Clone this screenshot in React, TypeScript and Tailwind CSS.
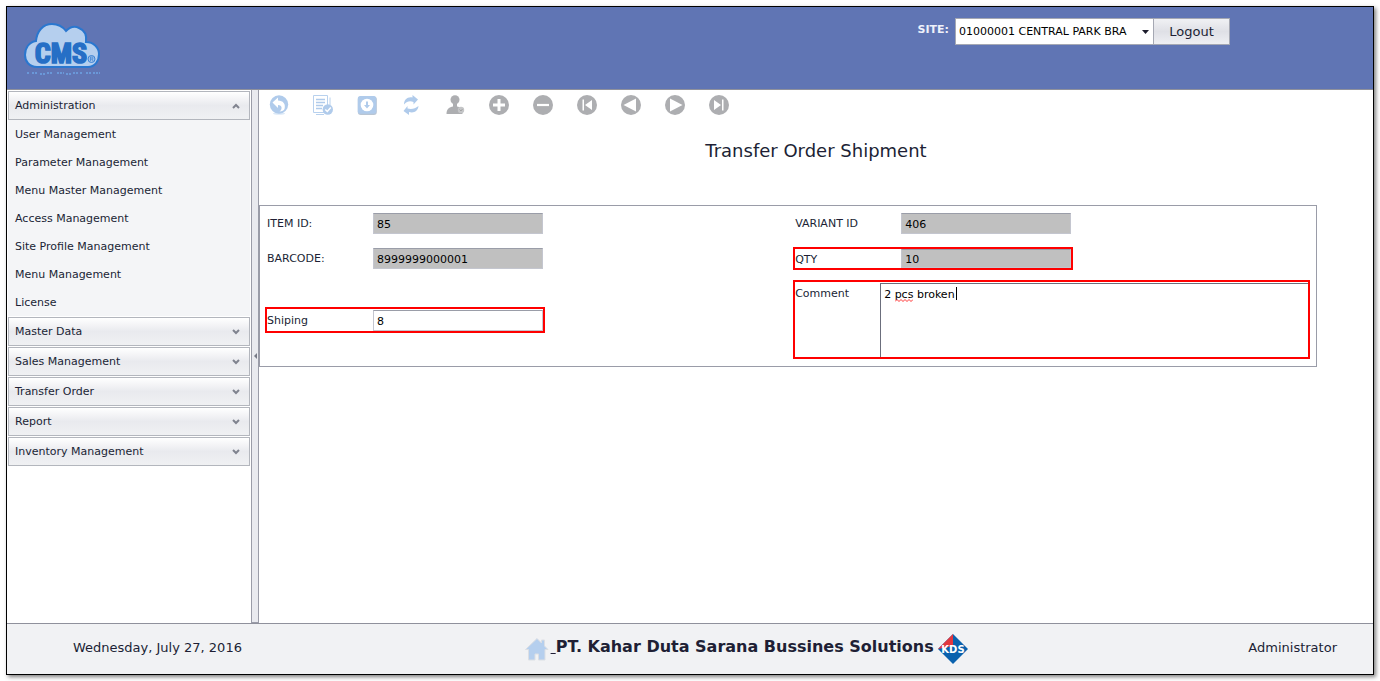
import { useState, type ReactNode } from "react";

const menuItems = [
  "User Management",
  "Parameter Management",
  "Menu Master Management",
  "Access Management",
  "Site Profile Management",
  "Menu Management",
  "License",
];

const closedGroups = ["Master Data", "Sales Management", "Transfer Order", "Report", "Inventory Management"];

function Chevron({ up = false }: { up?: boolean }) {
  return (
    <svg width="8" height="6" viewBox="0 0 8 6" fill="none" stroke="#80838f" strokeWidth="2">
      {up ? <path d="M1 5l3-3 3 3" /> : <path d="M1 1l3 3 3-3" />}
    </svg>
  );
}

function GroupHeader({ label, open = false }: { label: string; open?: boolean }) {
  return (
    <button
      type="button"
      aria-expanded={open}
      className="flex h-[29px] w-full items-center justify-between border border-[#b3b6bd] bg-linear-to-b from-white via-[#e9eaee] to-[#f0f1f3] pr-[9px] pl-[6px] text-left"
    >
      <span className="pt-[2px]">{label}</span>
      <Chevron up={open} />
    </button>
  );
}

function Logo() {
  return (
    <svg width="80" height="56" viewBox="0 0 80 56" role="img" aria-label="CMS">
      <path
        d="M14 45C6 45 2 39 2 33C2 26 6 20 13 19C14 9 20 2 29 2C35 2 40 5 43 9C47 5 52 4 56 6C61 8 64 13 63 20C71 20 76 26 76 32C76 39 72 45 65 45Z"
        fill="#b5cfee"
        stroke="#2a77cf"
        strokeWidth="2"
      />
      <text
        x="38"
        y="41"
        textAnchor="middle"
        fill="#266fc6"
        stroke="#266fc6"
        strokeWidth="1.6"
        fontSize="28"
        className="font-['Roboto_Condensed','Liberation_Sans_Narrow',Roboto,sans-serif] font-bold"
      >
        CMS
      </text>
      <circle cx="68.500" cy="37" r="3.500" fill="#9fc1ea" stroke="#3b82d3" />
      <path d="M67.500 39v-4h1.500q1 0 1 1t-1 1h-1.500m1.500 0l1 2" fill="none" stroke="#3b82d3" strokeWidth=".7" />
      <path
        d="M4 51h3m2 0h6m2 1h5m2-1h5m5 0h7m2 1h5m2-1h5m2 0h3m3 0h5m2 0h7"
        stroke="#6fa8ea"
        strokeWidth="2"
        strokeDasharray="2 1"
        opacity=".7"
      />
    </svg>
  );
}

function Disc({ children }: { children: ReactNode }) {
  return (
    <>
      <circle cx="10" cy="10" r="10" fill="#adaeb1" />
      {children}
    </>
  );
}

const tools: { label: string; art: ReactNode }[] = [
  {
    label: "Back",
    art: (
      <>
        <ellipse cx="10" cy="18.500" rx="6" ry="1.300" fill="#dce9f7" />
        <circle cx="10" cy="9.500" r="9.200" fill="#b0cbeb" />
        <path d="M3.500 7.500L9 2.500V5.500C14 5.500 17 9 15.500 14C15 15.500 13 16.500 10.500 16.500C13.500 14.500 13.500 10 9 10V13Z" fill="#fff" />
      </>
    ),
  },
  {
    label: "Save",
    art: (
      <>
        <path d="M.5 .5h14v17H.5zM17 2.500v8M3 19.500h8" fill="#fff" stroke="#b8d1ee" />
        <path d="M3 4.500h9M3 7.500h9M3 10.500h7M3 13.500h6" stroke="#b0cbeb" strokeWidth="1.400" />
        <circle cx="14.800" cy="14.500" r="5.200" fill="#b0cbeb" />
        <path d="M12.300 14.500l2 2 3.500-4" fill="none" stroke="#fff" strokeWidth="1.500" />
      </>
    ),
  },
  {
    label: "Download",
    art: (
      <>
        <rect x=".8" y="1.500" width="19" height="18.500" rx="3" fill="#b9c5d3" />
        <rect x=".8" y="1" width="18.400" height="17.800" rx="2.500" fill="#b0cbeb" />
        <circle cx="10" cy="10" r="6.300" fill="#fff" />
        <path d="M9 6.500h2V10h2l-3 3.500L7 10h2z" fill="#b0cbeb" />
      </>
    ),
  },
  {
    label: "Refresh",
    art: (
      <>
        <path d="M3 9.500C3 4.500 6.500 1.500 11.500 2.500V0L17 4.500L12.500 9.500V7C8.500 5.500 6 6.500 3 9.500Z" fill="#b0cbeb" />
        <path d="M17.500 11C17 16 13 18.500 8 17V20L2.500 16L6.500 11V13.500C11 14.500 14 13.500 17.500 11Z" fill="#b0cbeb" />
      </>
    ),
  },
  {
    label: "User",
    art: (
      <>
        <circle cx="10" cy="4.800" r="4.500" fill="#adaeb1" />
        <path d="M1.500 19C1.500 14 4.500 12 8 11.500V8H12V11.500C15.500 12 17.500 14 17.500 19Z" fill="#adaeb1" />
        <circle cx="16" cy="15" r="3.200" fill="#c4c5c7" />
        <path d="M14.500 14.500l1.500 1.500 1.500-2" fill="none" stroke="#999" strokeWidth=".8" />
      </>
    ),
  },
  { label: "Add", art: <Disc><path d="M10 4v12M4 10h12" stroke="#fff" strokeWidth="3" /></Disc> },
  { label: "Remove", art: <Disc><path d="M4 10h12" stroke="#fff" strokeWidth="2.200" /></Disc> },
  { label: "First", art: <Disc><path d="M5.500 4.500H7v11H5.500zM15 5v10l-7-5z" fill="#fff" /></Disc> },
  { label: "Previous", art: <Disc><path d="M15 3.500v13L2.500 10z" fill="#fff" /></Disc> },
  { label: "Next", art: <Disc><path d="M5 3.500v13L17.500 10z" fill="#fff" /></Disc> },
  { label: "Last", art: <Disc><path d="M13 4.500h1.500v11H13zM5 5v10l7-5z" fill="#fff" /></Disc> },
];

function Field({
  id,
  label,
  value,
  readOnly = false,
  className = "h-[26px] border-transparent pt-px",
}: {
  id: string;
  label: string;
  value: string;
  readOnly?: boolean;
  className?: string;
}) {
  return (
    <div className={`flex w-[280px] border-2 ${className}`}>
      <label htmlFor={id} className="w-[106px] leading-[22px]">
        {label}
      </label>
      <input
        id={id}
        defaultValue={value}
        readOnly={readOnly}
        className={
          readOnly
            ? "h-[21px] max-h-full w-[170px] border border-[#c4c6cf] border-t-[#9a9da8] bg-[#c0c0c0] px-[3px] pt-[2px] text-black outline-none"
            : "h-[21px] w-[170px] border border-[#c4c6cf] border-t-[#9a9da8] bg-white px-[3px] pt-[2px] text-black outline-none"
        }
      />
    </div>
  );
}

export default function App() {
  const [comment, setComment] = useState("2 pcs broken");
  const [pristine, setPristine] = useState(true);

  return (
    <div className="flex min-h-screen flex-col bg-white p-[6px] font-['DejaVu_Sans',Verdana,sans-serif] text-[11px] text-[#201f35]">
      <div className="flex grow flex-col border border-black shadow-[2px_2px_4px_rgba(0,0,0,0.5)]">
        <header className="flex h-[83px] items-start justify-between border-b border-[#8f919c] bg-[#6075b4] pr-[143px] pl-[16px]">
          <div className="pt-[15px]">
            <Logo />
          </div>
          <div className="flex pt-[11px]">
            <label htmlFor="site" className="pt-[4px] pr-[6px] leading-[16px] font-bold text-[#eef1fa]">
              SITE:
            </label>
            <div className="relative">
              <select
                id="site"
                className="h-[27px] w-[198px] appearance-none border border-r-0 border-[#a5a8b3] bg-white pt-[2px] pr-[16px] pl-[3px] text-black outline-none"
              >
                <option>01000001 CENTRAL PARK BRA</option>
              </select>
              <svg className="pointer-events-none absolute top-[12px] right-[4px]" width="7" height="4" viewBox="0 0 7 4">
                <path d="M0 0h7L3.500 4z" fill="#1c1c2c" />
              </svg>
            </div>
            <button
              type="button"
              className="h-[27px] w-[77px] border border-[#a5a8b3] bg-linear-to-b from-[#f0f1f4] via-[#dfe0e6] to-[#eeeff3] text-[13px]"
            >
              Logout
            </button>
          </div>
        </header>

        <div className="flex grow">
          <nav className="w-[244px] shrink-0 p-px">
            <GroupHeader label="Administration" open />
            <ul className="mb-px bg-[#f4f5f7]">
              {menuItems.map((item) => (
                <li key={item}>
                  <a href="#" className="block pt-[2px] pl-[7px] leading-[26px]">
                    {item}
                  </a>
                </li>
              ))}
            </ul>
            <div className="flex flex-col gap-px">
              {closedGroups.map((label) => (
                <GroupHeader key={label} label={label} />
              ))}
            </div>
          </nav>

          <button
            type="button"
            aria-label="Collapse menu"
            className="flex w-[8px] shrink-0 items-center justify-center border border-t-0 border-[#9a9ca8] bg-[#e9eaef]"
          >
            <svg width="3" height="6" viewBox="0 0 3 6">
              <path d="M3 0v6L0 3z" fill="#777a87" />
            </svg>
          </button>

          <main className="min-w-0 grow">
            <div className="flex gap-[24px] pt-[5px] pl-[10px]">
              {tools.map((tool) => (
                <button key={tool.label} type="button" aria-label={tool.label} className="h-[20px] w-[20px]">
                  <svg width="20" height="20" viewBox="0 0 20 20">
                    {tool.art}
                  </svg>
                </button>
              ))}
            </div>

            <h1 className="pt-[24px] pb-[43px] text-center text-[18px] leading-[23px] text-[#201f35]">
              Transfer Order Shipment
            </h1>

            <form className="grid w-[95%] grid-cols-2 border border-[#9a9ca8] pt-[4px] pb-[7px]">
              <div className="flex flex-col pl-[5px]">
                <Field id="item" label="ITEM ID:" value="85" readOnly />
                <div className="pt-[9px]">
                  <Field id="barcode" label="BARCODE:" value="8999999000001" readOnly />
                </div>
                <div className="pt-[36px]">
                  <Field id="shiping" label="Shiping" value="8" className="h-[26px] border-[#f00] pt-px" />
                </div>
              </div>
              <div className="flex flex-col pr-[6px] pl-[5px]">
                <Field id="variant" label="VARIANT ID" value="406" readOnly />
                <div className="pt-[11px]">
                  <Field id="qty" label="QTY" value="10" readOnly className="h-[23px] border-[#f00]" />
                </div>
                <div className="pt-[10px]">
                  <div className="flex h-[79px] border-2 border-[#f00] pt-px">
                    <label htmlFor="comment" className="w-[85px] shrink-0 leading-[22px]">
                      Comment
                    </label>
                    <div className="relative flex min-w-0 grow">
                      <textarea
                        id="comment"
                        value={comment}
                        spellCheck={false}
                        onChange={(event) => {
                          setPristine(false);
                          setComment(event.target.value);
                        }}
                        className="min-w-0 grow resize-none border-t border-l border-[#6b6e7c] bg-white px-[3px] pt-[4px] leading-[14px] text-black outline-none"
                      />
                      {pristine && (
                        <>
                          <svg className="pointer-events-none absolute top-[16px] left-[15px]" width="18" height="3" viewBox="0 0 18 3">
                            <path d="M0 2.500l2-2 2 2 2-2 2 2 2-2 2 2 2-2 2 2 2-2" fill="none" stroke="#f00" strokeWidth=".8" />
                          </svg>
                          <span className="pointer-events-none absolute top-[4px] left-[76px] h-[13px] w-px bg-black" />
                        </>
                      )}
                    </div>
                  </div>
                </div>
              </div>
            </form>
          </main>
        </div>

        <footer className="flex h-[51px] items-center justify-between border-t border-[#8f919c] bg-[#f1f2f4] pr-[36px] pl-[66px] text-[13px]">
          <span className="pb-[2px]">Wednesday, July 27, 2016</span>
          <div className="flex items-center text-[16px] font-bold">
            <svg width="26" height="26" viewBox="0 0 26 26" role="img" aria-label="Home">
              <path d="M14 2.500L2.500 13.500H5.500V24H12V18h3.500v6H22V13.500h3L21.500 10V4h-3v3z" fill="#b5cfee" stroke="#dcdfe4" />
            </svg>
            <a href="#" className="pb-[4px] pl-[2px]">
              <span className="font-normal underline">&nbsp;</span>PT. Kahar Duta Sarana Bussines Solutions
            </a>
            <svg className="ml-[4px]" width="30" height="30" viewBox="0 0 30 30" role="img" aria-label="KDS">
              <path d="M15 0L30 15L15 30L0 15Z" fill="#0a62ae" />
              <path d="M15 0V12L0 15Z" fill="#e2373f" />
              <text x="15" y="19" textAnchor="middle" fontSize="10" fill="#fff" className="font-['DejaVu_Sans',sans-serif] font-bold">
                KDS
              </text>
            </svg>
          </div>
          <span className="pb-[2px]">Administrator</span>
        </footer>
      </div>
    </div>
  );
}
